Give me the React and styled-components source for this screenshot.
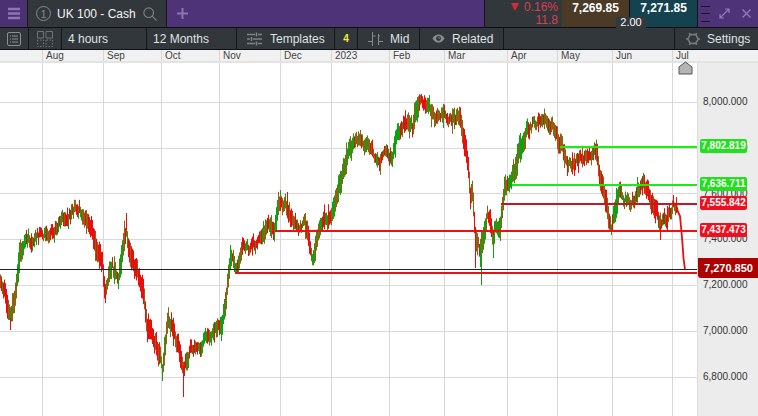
import React, { useMemo } from "react";
import styled, { createGlobalStyle } from "styled-components";

const Global = createGlobalStyle`
  html, body { margin: 0; padding: 0; width: 758px; height: 416px; overflow: hidden; background: #fff; }
  body { font-family: "Liberation Sans", Arial, sans-serif; }
`;

const Page = styled.div`
  width: 758px; height: 416px; display: flex; flex-direction: column; overflow: hidden;
`;

const TopBar = styled.header`
  height: 27px; flex: none; display: flex; background: #4f3379; border-bottom: 1px solid #0d0f10; position: relative;
`;
const MenuCell = styled.div`
  width: 27px; display: flex; align-items: center; justify-content: center; background: #4b3172; border-right: 1px solid #15171a;
`;
const Tab = styled.div`
  width: 139px; flex: none; display: flex; align-items: center; background: #32373b; color: #f4f4f4; font-size: 12px; padding-left: 8px; box-sizing: border-box; border-right: 1px solid #15171a; white-space: nowrap;
`;
const Badge = styled.span`
  width: 13px; height: 13px; border: 1.5px solid #85898c; border-radius: 50%; color: #85898c; font-size: 11px; display: flex; align-items: center; justify-content: center; margin-right: 6px;
`;
const AddCell = styled.div`
  padding-left: 10px; display: flex; align-items: center;
`;
const Grow = styled.div`flex: 1;`;
const Change = styled.div`
  width: 78px; flex: none; box-sizing: border-box; background: #32373b; border-left: 1px solid #15171a; padding: 0 4px 0 0; display: flex; flex-direction: column; align-items: flex-end; justify-content: center; color: #d9404e; font-size: 12px; line-height: 13px;
`;
const ChangeRow = styled.div`display: flex; align-items: center; gap: 5px;`;
const DownTriangle = styled.span`
  width: 0; height: 0; border-left: 4.5px solid transparent; border-right: 4.5px solid transparent; border-top: 8px solid #d9283c;
`;
const Quote = styled.div`
  width: ${p => p.$w}px; flex: none; background: ${p => p.$bg}; color: #fff; font-weight: 700; font-size: 12px; display: flex; justify-content: center; padding-top: 1px; line-height: 14px; box-sizing: border-box; border-right: 1px solid #111;
`;
const Spread = styled.div`
  position: absolute; left: 616px; top: 17px; width: 30px; height: 11px; background: #33383c; color: #fff; font-size: 11px; line-height: 11px; text-align: center; z-index: 2;
`;
const WinCell = styled.div`
  width: 60px; flex: none; display: flex; align-items: center; padding-left: 3px; box-sizing: border-box;
`;
const Lines = styled.div`
  display: flex; flex-direction: column; gap: 6.5px; width: 9px; margin-right: 9px;
  span { height: 1px; background: #15171a; display: block; }
`;
const ExpandSlot = styled.span`display: flex; margin-right: 12px;`;

const ToolBar = styled.nav`
  height: 21px; flex: none; display: flex; background: #32373b; color: #dfe3e5; font-size: 12px; border-bottom: 1px solid #0d0f10;
`;
const ToolCell = styled.div`
  width: ${p => p.$w}px; flex: none; box-sizing: border-box; display: flex; align-items: center; justify-content: ${p => p.$center ? "center" : "flex-start"}; padding-left: ${p => p.$pl || 0}px; gap: ${p => p.$gap || 0}px; border-right: ${p => p.$last ? "none" : "1px solid #15171a"}; white-space: nowrap;
`;
const Count = styled.span`color: #f2ee3c; font-weight: 700; font-size: 10px;`;
const ToolSpacer = styled.div`flex: 1; border-right: 1px solid #15171a;`;

const TimeAxis = styled.div`
  height: 11px; flex: none; background: #f1f1f1; display: flex; font-size: 10px; line-height: 12px; color: #444; overflow: hidden;
`;
const Month = styled.div`
  width: ${p => p.$w}px; flex: none; padding-left: 3px; box-sizing: border-box; border-left: ${p => p.$first ? "none" : "1px solid #d6d6d6"};
`;
const Band = styled.div`height: 2px; flex: none; background: #e3e3e3;`;

const ChartRow = styled.div`flex: 1; display: flex; min-height: 0; position: relative;`;
const Plot = styled.svg`width: 697px; height: 353px; flex: none; display: block;`;
const PriceAxis = styled.div`
  flex: 1; background: #ececec; border-left: 1px solid #dcdcdc; position: relative; font-size: 10px; color: #333; padding-left: 5px; padding-top: 32px; box-sizing: border-box;
`;
const Tick = styled.div`height: 45.83px; line-height: 14px;`;
const Tag = styled.div`
  position: absolute; left: 2px; top: ${p => p.$y - 63 - 7}px; width: 47px; height: 14px; line-height: 14px; border-radius: 2px; text-align: center; font-size: 10px; font-weight: 700; color: ${p => p.$fg || "#fff"}; background: ${p => p.$bg};
`;
const Current = styled.div`
  position: absolute; left: 0; top: ${258 - 63}px; width: 61px; height: 20px; line-height: 20px; background: #ad0000; color: #fff; font-weight: 700; font-size: 11px; text-align: center; border-radius: 0 0 0 3px;
`;
const HomeArrow = styled.svg`position: absolute; left: 678px; top: -2px; width: 15px; height: 14px;`;

const KEY = [
  [0,285],[5,292],[10,318],[14,297],[20,256],[28,243],[40,234],[53,230],[65,216],[75,205],[82,207],[90,224],[97,250],[102,262],[105,292],[112,268],[118,282],[122,252],[126,230],[130,250],[135,268],[143,290],[147,325],[155,345],[162,370],[168,320],[173,332],[178,345],[183,365],[190,345],[197,347],[205,338],[213,332],[222,320],[226,295],[230,255],[237,267],[242,247],[250,250],[257,245],[262,243],[266,226],[274,224],[280,198],[285,203],[293,222],[300,228],[305,228],[312,254],[318,230],[325,222],[332,212],[338,190],[342,170],[350,148],[355,136],[363,148],[370,155],[378,158],[388,160],[393,150],[397,138],[407,122],[412,130],[417,106],[421,98],[430,110],[435,120],[442,118],[450,114],[460,124],[465,150],[468,175],[470,205],[472,192],[475,240],[480,252],[483,232],[487,210],[493,235],[500,220],[504,192],[512,178],[517,160],[521,145],[527,126],[538,122],[546,122],[553,132],[558,142],[565,160],[575,165],[585,158],[596,152],[600,183],[604,198],[611,226],[616,205],[620,190],[631,198],[638,192],[643,186],[653,207],[660,226],[668,216],[673,207],[678,213],[682,240],[684,268]
];
const SPIKES = [[183,397],[481,285],[126,213],[643,173],[660,240],[280,190],[10,330],[162,381],[105,300],[312,264],[475,268],[493,258],[574,176]];

function interp(x) {
  for (let i = 1; i < KEY.length; i++) {
    if (x <= KEY[i][0]) {
      const [a, b] = KEY[i - 1], [c, d] = KEY[i];
      return b + (d - b) * (x - a) / (c - a);
    }
  }
  return KEY[KEY.length - 1][1];
}

const GREEN = "#10a010";
const RED = "#ec0c0c";
const OLIVE = "#8c6410";

function makeBars() {
  let s = 12345;
  const rnd = () => ((s = (s * 1664525 + 1013904223) % 4294967296) / 4294967296);
  const bars = [];
  let wob = 0;
  for (let x = 0; x <= 676; x += 1) {
    wob = wob * 0.7 + (rnd() - 0.5) * 9;
    const m = interp(x) + wob;
    const slope = interp(x + 3) - interp(Math.max(0, x - 3));
    const steep = Math.min(Math.abs(slope), 24) * 0.25;
    const big = rnd() > 0.88 ? 7 : 0;
    const hi = m - (3 + rnd() * 4 + steep + big * rnd());
    const lo = m + 3 + rnd() * 4 + steep + big * rnd();
    const r = rnd();
    const bias = slope / 30;
    let c = r < 0.36 - bias ? RED : r < 0.72 ? OLIVE : GREEN;
    if (slope < -12) c = r < 0.6 ? GREEN : OLIVE;
    if (slope > 12) c = r < 0.7 ? RED : OLIVE;
    bars.push({ x: x + 0.5, hi, lo, c });
  }
  SPIKES.forEach(([x, y], i) => {
    const m = interp(x);
    bars.push({ x: x + 0.5, hi: Math.min(m, y), lo: Math.max(m, y), c: i % 2 ? GREEN : RED });
  });
  return bars;
}

const FINAL_DROP = "676,204 678,212 680,216 681.5,232 682.5,244 683.5,258 685,270";

const GRID_X = [42, 103, 161, 219, 280, 331, 389, 444, 507, 557, 612, 672];
const GRID_Y = [102.5, 148.5, 193.5, 239.5, 285.5, 331.5, 377.5];
const MONTHS = ["Aug", "Sep", "Oct", "Nov", "Dec", "2023", "Feb", "Mar", "Apr", "May", "Jun", "Jul"];
const TICKS = ["8,000.000", "7,800.000", "7,600.000", "7,400.000", "7,200.000", "7,000.000", "6,800.000"];
const OY = 63;

const LEVELS = [
  { y: 147, x: 560, c: "#1eea14" },
  { y: 185, x: 512, c: "#1eea14" },
  { y: 204, x: 501, c: "#c01a22" },
  { y: 231, x: 275, c: "#ee1010" },
  { y: 273, x: 235, c: "#ee1010" },
];

const MenuIcon = () => (
  <svg width="14" height="13" viewBox="0 0 14 13"><path d="M1 2h12M1 6.5h12M1 11h12" stroke="#8d76b5" strokeWidth="2.4" /></svg>
);
const SearchIcon = () => (
  <svg width="14" height="14" viewBox="0 0 16 16" fill="none" stroke="#7d8387" strokeWidth="1.3" style={{ marginLeft: 7 }}>
    <circle cx="6.5" cy="6.5" r="5.5" /><path d="M10.5 10.5L15.5 15.5" />
  </svg>
);
const PlusIcon = () => (
  <svg width="11" height="11" viewBox="0 0 11 11"><path d="M5.5 0v11M0 5.5h11" stroke="#8a76ad" strokeWidth="2" /></svg>
);
const ListIcon = () => (
  <svg width="14" height="14" viewBox="0 0 14 14" fill="none" stroke="#8a8f92">
    <rect x="0.5" y="0.5" width="13" height="13" rx="1.5" /><path d="M3 4h1M5 4h6M3 7h1M5 7h6M3 10h1M5 10h6" />
  </svg>
);
const GridIcon = () => (
  <svg width="16" height="16" viewBox="0 0 16 16" fill="none" stroke="#6f7477">
    <path d="M0.5 0.5h6v6.5h-6zM9 0.5h6.5v6.5H9z" /><path d="M0.5 9v6.5h6V9zM9 9v6.5h6.5V9z" strokeDasharray="1.5 1.5" />
  </svg>
);
const SlidersIcon = () => (
  <svg width="15" height="14" viewBox="0 0 15 14" stroke="#7d8285" strokeWidth="1.5">
    <path d="M0 2.5h8M11 2.5h4M0 7h3M6 7h9M0 11.5h8M11 11.5h4" /><path d="M9.5 0.5v4M4.5 5v4M9.5 9.5v4" />
  </svg>
);
const MidIcon = () => (
  <svg width="15" height="16" viewBox="0 0 15 16" fill="none" stroke="#858a8d">
    <path d="M4.5 1v14M10.5 3v11M0 10.5h4.5V5h3M10.5 5H12M10.5 10.5H15" />
  </svg>
);
const EyeIcon = () => (
  <svg width="13" height="11" viewBox="0 0 16 12">
    <path d="M0.5 6C3 2 5.5 1 8 1s5 1 7.5 5C13 10 10.5 11 8 11S3 10 0.5 6z" fill="#888d90" />
    <circle cx="8" cy="6" r="3" fill="#32373b" />
    <path d="M8 4a2 2 0 0 1 2 2H8z" fill="#888d90" />
  </svg>
);
const GearIcon = () => (
  <svg width="14" height="14" viewBox="0 0 16 16" fill="none" stroke="#767b7e" strokeWidth="1.8">
    <path d="M5 3h6l3 5-3 5H5L2 8z" /><path d="M3.5 1.5L5 3M12.5 1.5L11 3M3.5 14.5L5 13M12.5 14.5L11 13M0 8h2M14 8h2" />
  </svg>
);
const ExpandIcon = () => (
  <svg width="11" height="11" viewBox="0 0 11 11" fill="none" stroke="#8f7bb8" strokeWidth="1.2">
    <path d="M1 10L10 1M6 1h4v4M1 6v4h4" />
  </svg>
);
const CloseIcon = () => (
  <svg width="9" height="9" viewBox="0 0 9 9" stroke="#8f7bb8" strokeWidth="1.4"><path d="M0.5 0.5l8 8M8.5 0.5l-8 8" /></svg>
);

export default function App() {
  const bars = useMemo(makeBars, []);
  const widths = GRID_X.map((x, i) => (i < GRID_X.length - 1 ? GRID_X[i + 1] - x : 697 - x));
  return (
    <Page>
      <Global />
      <TopBar>
        <MenuCell><MenuIcon /></MenuCell>
        <Tab><Badge>1</Badge>UK 100 - Cash<SearchIcon /></Tab>
        <AddCell><PlusIcon /></AddCell>
        <Grow />
        <Change>
          <ChangeRow><DownTriangle />0.16%</ChangeRow>
          <div>11.8</div>
        </Change>
        <Quote $w={68} $bg="#4a3a26">7,269.85</Quote>
        <Quote $w={68} $bg="#14424f">7,271.85</Quote>
        <WinCell>
          <Lines><span /><span /><span /></Lines>
          <ExpandSlot><ExpandIcon /></ExpandSlot>
          <CloseIcon />
        </WinCell>
        <Spread>2.00</Spread>
      </TopBar>
      <ToolBar>
        <ToolCell $w={29} $center><ListIcon /></ToolCell>
        <ToolCell $w={33} $center><GridIcon /></ToolCell>
        <ToolCell $w={85} $pl={6}>4 hours</ToolCell>
        <ToolCell $w={90} $pl={6}>12 Months</ToolCell>
        <ToolCell $w={98} $pl={10} $gap={8}><SlidersIcon />Templates</ToolCell>
        <ToolCell $w={23} $center><Count>4</Count></ToolCell>
        <ToolCell $w={62} $pl={10} $gap={7}><MidIcon />Mid</ToolCell>
        <ToolCell $w={84} $pl={12} $gap={7}><EyeIcon />Related</ToolCell>
        <ToolSpacer />
        <ToolCell $w={83} $pl={11} $gap={7} $last><GearIcon />Settings</ToolCell>
      </ToolBar>
      <TimeAxis>
        <Month $w={42} $first />
        {MONTHS.map((m, i) => <Month key={m} $w={widths[i]}>{m}</Month>)}
      </TimeAxis>
      <Band />
      <ChartRow>
        <Plot viewBox={`0 ${OY} 697 353`}>
          {GRID_X.map(x => <line key={x} x1={x + 0.5} x2={x + 0.5} y1={OY} y2="416" stroke="#d8d8dc" />)}
          {GRID_Y.map(y => <line key={y} x1="0" x2="697" y1={y} y2={y} stroke="#dadada" />)}
          {bars.map((b, i) => (
            <line key={i} x1={b.x} x2={b.x} y1={b.hi} y2={b.lo} stroke={b.c} strokeWidth="1" />
          ))}
          <polyline points={FINAL_DROP} fill="none" stroke={RED} strokeWidth="1.8" />
          <line x1="0" x2="697" y1="269.5" y2="269.5" stroke="#222" />
          {LEVELS.map(l => <line key={l.y} x1={l.x} x2="697" y1={l.y} y2={l.y} stroke={l.c} strokeWidth="2" />)}
        </Plot>
        <HomeArrow viewBox="0 0 15 14">
          <path d="M1 13V6l6.5-5L14 6v7z" fill="#b4b4b4" stroke="#555" />
        </HomeArrow>
        <PriceAxis>
          {TICKS.map(t => <Tick key={t}>{t}</Tick>)}
          <Tag $y={146} $bg="#22e01e">7,802.819</Tag>
          <Tag $y={184} $bg="#22e01e">7,636.711</Tag>
          <Tag $y={203} $bg="#ee1020">7,555.842</Tag>
          <Tag $y={230} $bg="#ee1020">7,437.473</Tag>
          <Current>7,270.850</Current>
        </PriceAxis>
      </ChartRow>
    </Page>
  );
}
